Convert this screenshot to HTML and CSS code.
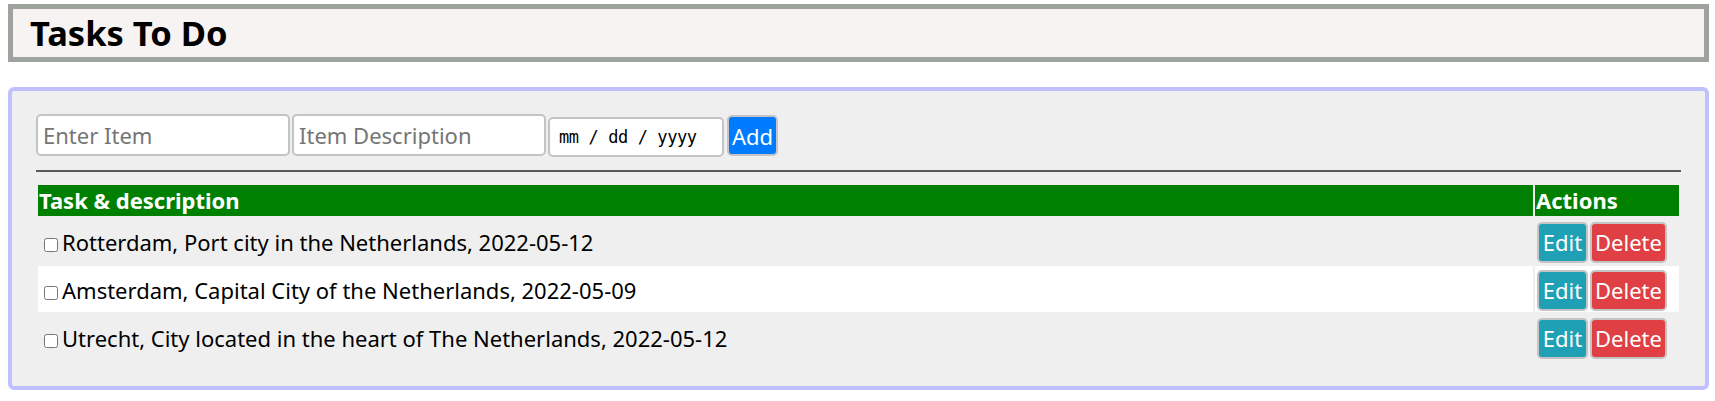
FILE: index.html
```html
<!DOCTYPE html>
<html lang="en">
<head>
<meta charset="utf-8">
<title>Tasks To Do</title>
<link rel="stylesheet" href="styles.css">
</head>
<body>
<header class="title-bar">
  <h1 class="title">Tasks To Do</h1>
</header>
<main class="panel">
  <form class="entry">
    <input class="field" type="text" placeholder="Enter Item">
    <input class="field" type="text" placeholder="Item Description">
    <div class="field date">mm / dd / yyyy</div>
    <button class="btn btn-add" type="button">Add</button>
  </form>
  <hr class="divider">
  <table class="tasks">
    <thead>
      <tr>
        <th class="col-task">Task &amp; description</th>
        <th class="col-actions">Actions</th>
      </tr>
    </thead>
    <tbody>
      <tr>
        <td class="task"><input class="check" type="checkbox"><span>Rotterdam, Port city in the Netherlands, 2022-05-12</span></td>
        <td class="actions"><button class="btn btn-edit" type="button">Edit</button><button class="btn btn-delete" type="button">Delete</button></td>
      </tr>
      <tr>
        <td class="task"><input class="check" type="checkbox"><span>Amsterdam, Capital City of the Netherlands, 2022-05-09</span></td>
        <td class="actions"><button class="btn btn-edit" type="button">Edit</button><button class="btn btn-delete" type="button">Delete</button></td>
      </tr>
      <tr>
        <td class="task"><input class="check" type="checkbox"><span>Utrecht, City located in the heart of The Netherlands, 2022-05-12</span></td>
        <td class="actions"><button class="btn btn-edit" type="button">Edit</button><button class="btn btn-delete" type="button">Delete</button></td>
      </tr>
    </tbody>
  </table>
</main>
</body>
</html>
```
FILE: styles.css
```css
html, body {
  margin: 0;
  background: #ffffff;
}
body {
  padding: 4px 6px 0 8px;
  font-family: "Noto Sans", "DejaVu Sans", sans-serif;
  font-size: 22px;
  color: #000;
}
.title-bar {
  height: 58px;
  box-sizing: border-box;
  border: 5px solid #9ea39e;
  background: #f7f3f2;
  padding-left: 17px;
}
.title {
  margin: 0;
  font-size: 34.5px;
  font-weight: bold;
  line-height: 48px;
}
.panel {
  display: block;
  margin-top: 25px;
  border: 4px solid #c0c0ff;
  border-radius: 6px;
  background: #efefef;
  padding: 23px 24px 24px 24px;
}
.entry {
  display: flex;
  align-items: flex-start;
  gap: 2px;
  height: 43px;
  margin: 0;
}
.field {
  box-sizing: border-box;
  width: 254px;
  height: 42px;
  border: 2px solid #c4c4c4;
  border-radius: 5px;
  background: #fff;
  font-family: inherit;
  font-size: 22px;
  padding: 0 5px;
  margin: 0;
  outline: none;
}
.field::placeholder {
  color: #757575;
}
.date {
  width: 176px;
  height: 40px;
  margin-top: 3px;
  display: flex;
  align-items: center;
  padding: 0 0 0 9px;
  font-family: "DejaVu Sans Mono", "Liberation Mono", monospace;
  font-size: 17px;
  letter-spacing: -0.4px;
  white-space: pre;
}
.btn {
  box-sizing: border-box;
  height: 41px;
  border: 2px solid #c4c4c4;
  border-radius: 5px;
  color: #fff;
  font-family: inherit;
  font-size: 22px;
  line-height: 1;
  text-align: center;
  padding: 0;
  margin: 0;
  cursor: pointer;
}
.btn-add {
  width: 51px;
  background: #007bff;
  margin-top: 1px;
  margin-left: 1px;
}
.btn-edit {
  width: 51px;
  background: #20a0b4;
  margin-left: 1px;
  margin-right: 2px;
}
.btn-delete {
  width: 77px;
  background: #e04043;
}
.divider {
  border: 0;
  border-top: 2px solid #5a5a5a;
  margin: 13px 0 11px 0;
  height: 0;
}
.tasks {
  width: 100%;
  border-spacing: 2px;
  font-size: 22px;
}
.tasks th {
  background: #008000;
  color: #fff;
  text-align: left;
  font-weight: bold;
  height: 31px;
  line-height: 29px;
  padding: 0 1px;
}
.col-actions {
  width: 142px;
}
.tasks td {
  height: 44px;
  padding: 2px 1px 0 1px;
  line-height: 26px;
  vertical-align: middle;
  white-space: nowrap;
}
.tasks tbody tr:nth-child(even) td {
  background: #ffffff;
}
.check {
  width: 14px;
  height: 14px;
  margin: 0 4px 0 5px;
  vertical-align: -1px;
}
.actions {
  font-size: 0;
}
.actions .btn {
  vertical-align: middle;
  font-size: 22px;
}
```
